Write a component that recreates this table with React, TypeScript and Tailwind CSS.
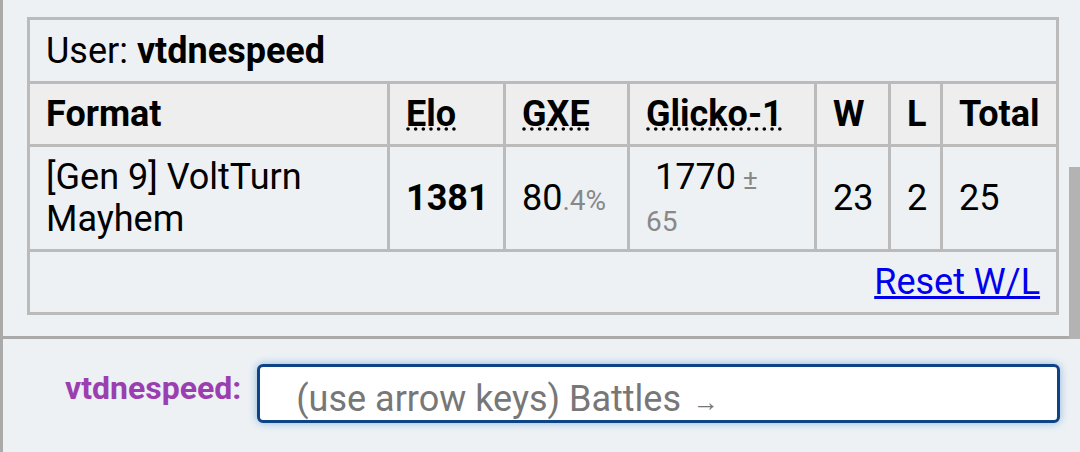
const cell = 'border-[3px] border-[#bbb] px-[16px] py-[9px] align-middle'
const head = cell + ' bg-[#eeeeee] text-left font-bold'

function Stat({ main, dim }: { main: string; dim: string }) {
    return (
        <>
            {main}
            <small className="text-[28px] leading-[30px] text-[#888]">{dim}</small>
        </>
    )
}

function App() {
    return (
        <main className="flex h-[452px] w-[1080px] flex-col overflow-hidden border-l-[3px] border-[#aaa] bg-[#edf1f4] font-['Roboto',sans-serif] text-[36px] leading-[42px] text-black">
            <div className="flex h-[339px] shrink-0">
                <section className="flex-1 border-b-[3px] border-[#aaa] pl-[24px] pt-[17px]">
                    <table className="w-[1029px] table-fixed border-collapse">
                        <colgroup>
                            <col className="w-[360px]" />
                            <col className="w-[116px]" />
                            <col className="w-[124px]" />
                            <col className="w-[187px]" />
                            <col className="w-[74px]" />
                            <col className="w-[52px]" />
                            <col className="w-[116px]" />
                        </colgroup>
                        <thead>
                            <tr>
                                <td colSpan={7} className={cell + ' pt-[10px]'}>
                                    User: <strong>vtdnespeed</strong>
                                </td>
                            </tr>
                            <tr>
                                <th className={head}>Format</th>
                                <th className={head}><abbr title="Elo rating">Elo</abbr></th>
                                <th className={head}><abbr title="user's percentage chance of winning a random battle">GXE</abbr></th>
                                <th className={head}><abbr title="Glicko-1 rating system: rating±deviation">Glicko-1</abbr></th>
                                <th className={head}>W</th>
                                <th className={head}>L</th>
                                <th className={head}>Total</th>
                            </tr>
                        </thead>
                        <tbody>
                            <tr>
                                <td className={cell}>[Gen 9] VoltTurn Mayhem</td>
                                <td className={cell}><strong>1381</strong></td>
                                <td className={cell}><Stat main="80" dim=".4%" /></td>
                                <td className={cell}>
                                    {'\u00a01770'}
                                    <small className="text-[28px] leading-[30px] text-[#888]">
                                        {' ±'}
                                        <br />
                                        65
                                    </small>
                                </td>
                                <td className={cell}>23</td>
                                <td className={cell}>2</td>
                                <td className={cell}>25</td>
                            </tr>
                            <tr>
                                <td colSpan={7} className={cell + ' h-[58px] text-right'}>
                                    <a href="#" className="text-[#0000ee] underline">Reset W/L</a>
                                </td>
                            </tr>
                        </tbody>
                    </table>
                </section>
                <div className="flex w-[11px] flex-col pt-[167px]">
                    <div className="flex-1 bg-[#b3b3b3]" />
                </div>
            </div>

            <form className="flex items-start gap-[16px] pl-[62px] pr-[20px] pt-[25px]">
                <label className="mt-[6px] text-[32px] leading-[36px] font-bold text-[#9b3fb0]">
                    vtdnespeed:
                </label>
                <div
                    role="textbox"
                    className="flex h-[59px] flex-1 items-center rounded-[6px] border-[3px] border-[#0e4485] bg-white pl-[36px] pt-[10px] text-[#777] shadow-[0_0_8px_#8fb5dd]"
                >
                    (use arrow keys) Battles
                    <span className="ml-[12px] mt-[6px] text-[26px]">→</span>
                </div>
            </form>
        </main>
    )
}

export default App
